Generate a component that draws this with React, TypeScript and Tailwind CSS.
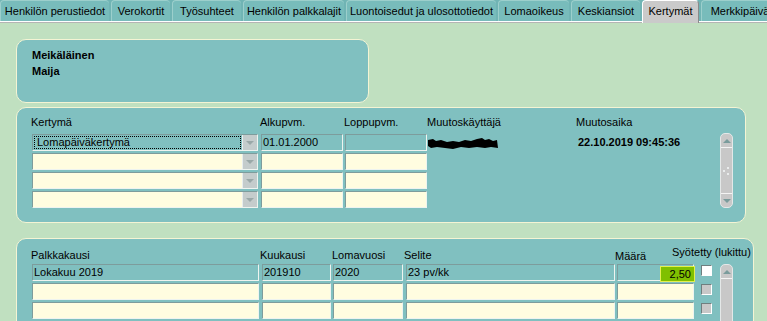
import React from 'react';

const tabs = [
  { label: 'Henkilön perustiedot', w: 'w-[109px]' },
  { label: 'Verokortit', w: 'w-[59px]' },
  { label: 'Työsuhteet', w: 'w-[69px]' },
  { label: 'Henkilön palkkalajit', w: 'w-[101px]' },
  { label: 'Luontoisedut ja ulosottotiedot', w: 'w-[150px]' },
  { label: 'Lomaoikeus', w: 'w-[71px]' },
  { label: 'Keskiansiot', w: 'w-[69px]' },
  { label: 'Kertymät', w: 'w-[57px]', active: true },
  { label: 'Merkkipäivät', w: 'w-[80px]' },
];

const bevel = 'border border-t-[#7d9c9c] border-l-[#7d9c9c] border-b-[#eef4f0] border-r-[#eef4f0]';

const Field: React.FC<{ w: string; teal?: boolean; className?: string; children?: React.ReactNode }> = ({ w, teal, className = '', children }) => (
  <div className={`h-full ${w} ${bevel} ${teal ? 'bg-[#80c0c0]' : 'bg-[#fffde0]'} flex items-center pl-px leading-[15px] whitespace-nowrap overflow-hidden ${className}`}>
    {children}
  </div>
);

const Combo: React.FC<{ teal?: boolean; children?: React.ReactNode }> = ({ teal, children }) => (
  <div className={`h-full w-[226px] ${bevel} ${teal ? 'bg-[#80c0c0]' : 'bg-[#fffde0]'} flex`}>
    <div className="flex-1 p-px">
      {children && (
        <div className="h-full border border-dotted border-black flex items-center pl-[2px] leading-[13px]">{children}</div>
      )}
    </div>
    <div className="w-[15px] h-full bg-[#c4cccc] border-l border-[#e8eeee] flex items-center justify-center">
      <div className="w-0 h-0 border-l-[4px] border-r-[4px] border-t-[4px] border-l-transparent border-r-transparent border-t-[#9aa8a8]" />
    </div>
  </div>
);

const Arrow: React.FC<{ up?: boolean }> = ({ up }) =>
  up ? (
    <div className="w-0 h-0 border-l-[4px] border-r-[4px] border-b-[4px] border-l-transparent border-r-transparent border-b-[#7a9c9c]" />
  ) : (
    <div className="w-0 h-0 border-l-[4px] border-r-[4px] border-t-[4px] border-l-transparent border-r-transparent border-t-[#7a9c9c]" />
  );

const Check: React.FC<{ white?: boolean }> = ({ white }) => (
  <div className={`w-[11px] h-[11px] mt-px border border-t-[#6f7f7f] border-l-[#6f7f7f] border-b-white border-r-white ${white ? 'bg-white' : 'bg-[#c8c8c8]'}`} />
);

export default function App() {
  return (
    <div className="w-[767px] h-[321px] overflow-hidden bg-[#c0e0c0] text-[11px] text-black font-['Liberation_Sans',Arial,sans-serif]">
      {/* Tabs */}
      <div className="flex h-[23px] gap-[2px] bg-[#70b4b4] shadow-[inset_0_-1px_0_#b4b4b4,inset_0_-2px_0_#ffffff]">
        {tabs.map((t) =>
          t.active ? (
            <div
              key={t.label}
              className={`${t.w} shrink-0 h-[23px] rounded-t-[4px] bg-[#cacaca] border-t border-l border-white border-r border-r-[#8a8a8a] flex items-center justify-center pb-[2px] whitespace-nowrap`}
            >
              {t.label}
            </div>
          ) : (
            <div
              key={t.label}
              className={`${t.w} shrink-0 h-[21px] rounded-t-[4px] bg-[#78bcbb] border-t border-l border-[#9ccfcc] flex items-center justify-center whitespace-nowrap`}
            >
              {t.label}
            </div>
          )
        )}
      </div>

      <div className="pl-[16px] pt-[16px] flex flex-col">
        {/* Henkilö */}
        <div className="w-[353px] h-[64px] rounded-[10px] border border-[#f4f4d4] bg-[#80c0c0] pl-[15px] pt-[7px] font-bold leading-[16px]">
          <div>Meikäläinen</div>
          <div>Maija</div>
        </div>

        {/* Kertymät */}
        <div className="mt-[4px] w-[730px] h-[116px] rounded-[10px] border border-[#f4f4d4] bg-[#80c0c0] pl-[15px] pr-[12px] pt-[7px] flex flex-col">
          <div className="flex h-[14px] leading-[14px] -ml-px">
            <div className="w-[229px]">Kertymä</div>
            <div className="w-[84px]">Alkupvm.</div>
            <div className="w-[83px]">Loppupvm.</div>
            <div className="w-[149px]">Muutoskäyttäjä</div>
            <div>Muutosaika</div>
          </div>
          <div className="flex mt-[5px]">
            <div className="flex flex-col gap-[2px]">
              {[0, 1, 2, 3].map((i) => (
                <div key={i} className="flex h-[17px]">
                  <Combo teal={i === 0}>{i === 0 ? 'Lomapäiväkertymä' : null}</Combo>
                  <Field w="w-[82px] ml-[3px]" teal={i === 0}>{i === 0 ? '01.01.2000' : null}</Field>
                  <Field w="w-[82px] ml-[2px]" teal={i === 0} />
                  <div className="w-[149px] h-full flex items-center">
                    {i === 0 && (
                      <svg width="72" height="14" viewBox="0 0 72 14">
                        <path
                          d="M1 4 L6 3 L9 5 L14 4 L20 6 L26 5 L32 6 L38 4 L44 5 L50 3 L55 2 L58 4 L62 3 L66 5 L70 4 L71 12 L64 11 L58 12 L50 11 L42 12 L34 11 L26 13 L18 12 L10 11 L4 12 L1 10 Z"
                          fill="#000"
                        />
                      </svg>
                    )}
                  </div>
                  <div className="h-full flex items-center pl-[2px] font-bold whitespace-nowrap">
                    {i === 0 ? '22.10.2019 09:45:36' : null}
                  </div>
                </div>
              ))}
            </div>
            <div className="ml-auto -mt-px w-[13px] h-[75px] rounded-[5px] bg-[#c8c8c8] border border-[#e4e8e8] flex flex-col">
              <div className="h-[14px] border-b border-[#f4f4f4] flex items-center justify-center">
                <Arrow up />
              </div>
              <div className="flex-1 flex items-center justify-center">
                <svg width="9" height="12" viewBox="0 0 9 12">
                  <circle cx="6" cy="3" r="1" fill="#f4f8f8" />
                  <circle cx="2" cy="6" r="1" fill="#f4f8f8" />
                  <circle cx="6" cy="9" r="1" fill="#f4f8f8" />
                </svg>
              </div>
              <div className="h-[14px] border-t border-[#f4f4f4] flex items-center justify-center">
                <Arrow />
              </div>
            </div>
          </div>
        </div>

        {/* Palkkakaudet */}
        <div className="mt-[15px] w-[738px] h-[110px] rounded-[10px] border border-[#f4f4d4] bg-[#80c0c0] pl-[15px] pt-[9px] flex flex-col">
          <div className="flex h-[14px] leading-[14px] -ml-px">
            <div className="w-[229px]">Palkkakausi</div>
            <div className="w-[72px]">Kuukausi</div>
            <div className="w-[72px]">Lomavuosi</div>
            <div className="w-[211px]">Selite</div>
            <div className="w-[57px] pt-px">Määrä</div>
            <div className="-mt-[3px] whitespace-nowrap">Syötetty (lukittu)</div>
          </div>
          <div className="flex mt-[2px]">
            <div className="flex flex-col gap-[2px]">
              {[0, 1, 2, 3].map((i) => (
                <div key={i} className="flex h-[17px]">
                  <Field w="w-[227px]" teal={i === 0}>{i === 0 ? 'Lokakuu 2019' : null}</Field>
                  <Field w="w-[69px] ml-[3px]" teal={i === 0}>{i === 0 ? '201910' : null}</Field>
                  <Field w="w-[70px] ml-[2px]" teal={i === 0}>{i === 0 ? '2020' : null}</Field>
                  <Field w="w-[209px] ml-[3px]" teal={i === 0}>{i === 0 ? '23 pv/kk' : null}</Field>
                  <Field w="w-[77px] ml-[2px]" teal={i === 0} className="justify-end overflow-visible">
                    {i === 0 && (
                      <div className="h-[16px] w-[35px] -mr-[2px] mt-[3px] bg-[#80c000] border border-[#e4f050] flex items-center justify-end pr-[3px]">
                        2,50
                      </div>
                    )}
                  </Field>
                  <div className="ml-[7px]">
                    <Check white={i === 0} />
                  </div>
                </div>
              ))}
            </div>
            <div className="ml-[8px] w-[13px] h-[80px] rounded-t-[5px] bg-[#c8c8c8] border border-[#e4e8e8] flex flex-col">
              <div className="h-[14px] border-b border-[#f4f4f4] flex items-center justify-center">
                <Arrow up />
              </div>
            </div>
          </div>
        </div>
      </div>
    </div>
  );
}
